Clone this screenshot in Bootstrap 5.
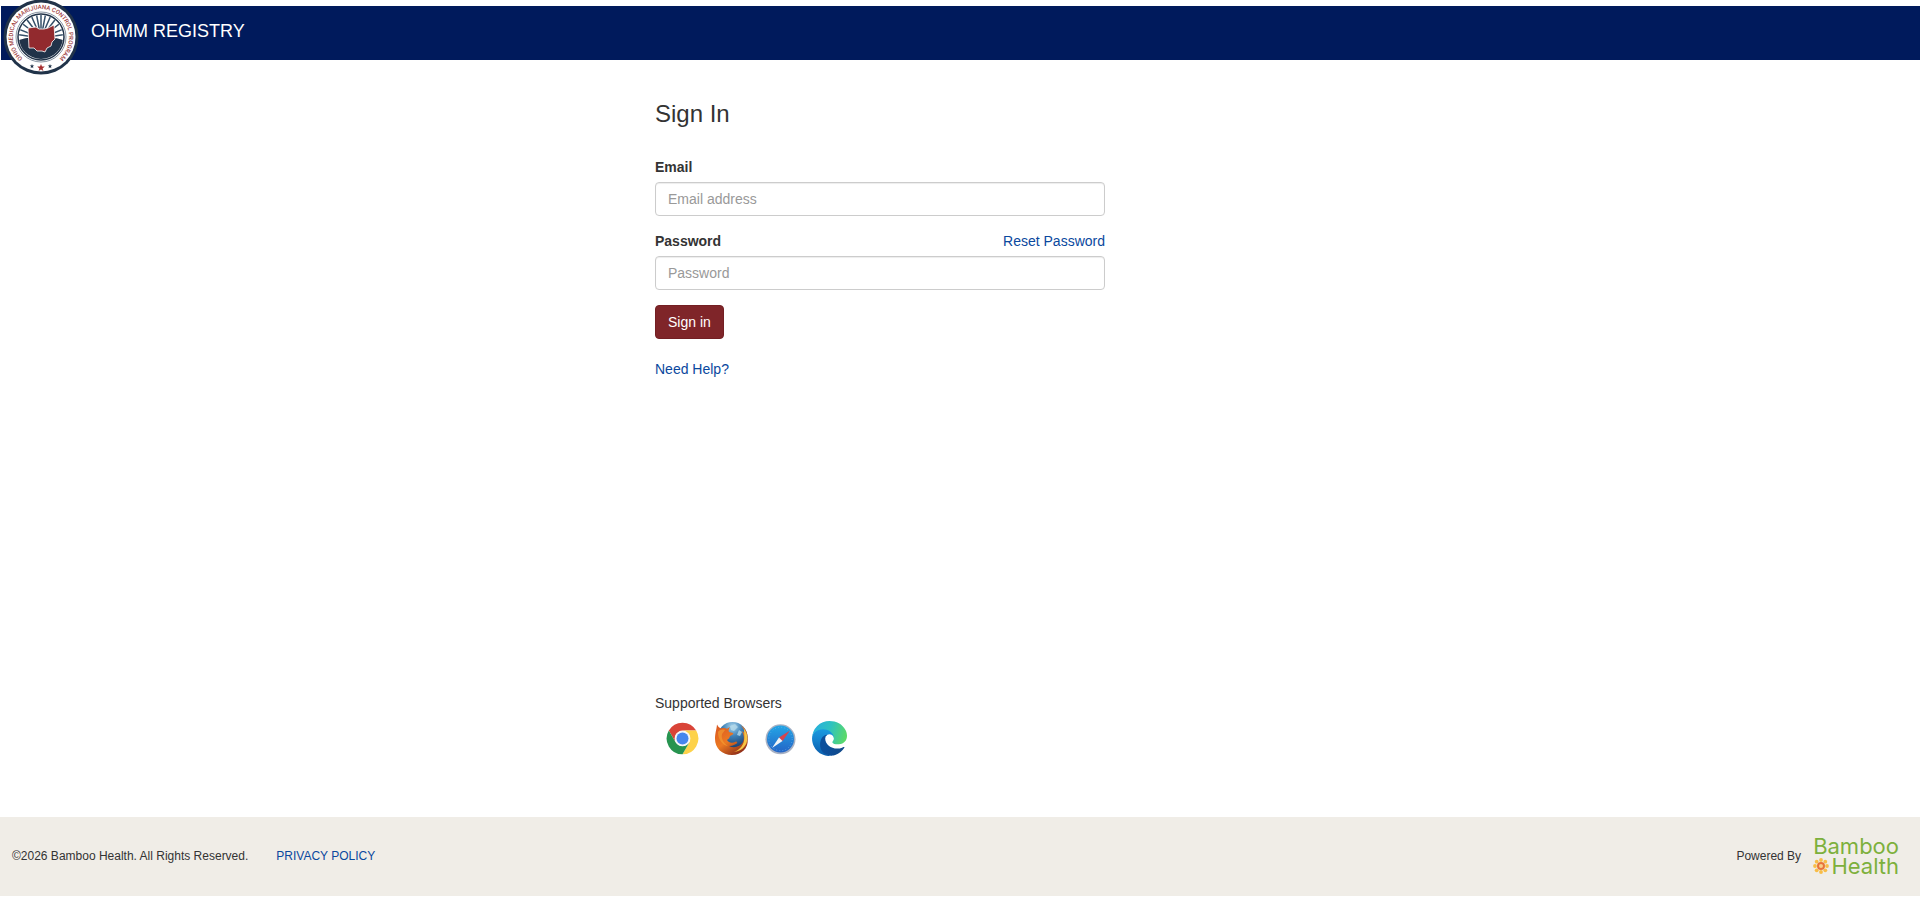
<!DOCTYPE html>
<html lang="en">
<head>
<meta charset="utf-8">
<meta name="viewport" content="width=device-width, initial-scale=1">
<title>OHMM Registry - Sign In</title>
<link href="https://cdn.jsdelivr.net/npm/bootstrap@5.3.0/dist/css/bootstrap.min.css" rel="stylesheet">
<style>
  body { font-family: "Liberation Sans", Arial, sans-serif; font-size: 14px; line-height: 20px; color: #333; padding: 6px 3px 20px 0; }
  a { color: #0a489e; text-decoration: none; }
  a:hover { text-decoration: underline; }
  .site-header { background: #001a5c; height: 54px; margin-left: 1px; padding-left: 90px; }
  .site-title { font-size: 18px; line-height: 20px; padding-top: 15px; color: #fff; }
  .seal { position: absolute; left: 2px; top: -6px; width: 76px; height: 76px; }
  .signin { width: 450px; max-width: 100%; }
  .signin-col { padding: 41px 15px 0; }
  h1 { font-size: 24px; line-height: 26px; margin-bottom: 30px; }
  .form-label { margin-bottom: 5px; }
  .field { margin-bottom: 15px; }
  .form-control { font-size: 14px; line-height: 20px; padding: 6px 12px; border-color: #ccc; border-radius: 4px; color: #555; box-shadow: inset 0 1px 1px rgba(0,0,0,.075); }
  .form-control::placeholder { color: #999; }
  .btn-signin { --bs-btn-color: #fff; --bs-btn-bg: #7f2529; --bs-btn-border-color: #731f23; --bs-btn-hover-color: #fff; --bs-btn-hover-bg: #661b1f; --bs-btn-hover-border-color: #591619; --bs-btn-font-size: 14px; --bs-btn-line-height: 20px; --bs-btn-border-radius: 4px; margin-bottom: 20px; }
  .browsers { padding: 0 15px 61px; }
  .browser-icons { gap: 14px; margin: 8px 0 0 10px; }
  .browser-icons svg { width: 35px; height: 35px; }
  .site-footer { background: #f0ede7; min-height: 79px; font-size: 12px; padding: 0 21px 2px 12px; }
  .footer-links { gap: 28px; }
  .brand-logo { font-family: Inter, sans-serif; font-size: 22px; line-height: 20px; color: #7db03c; }
  .brand-logo svg { width: 16px; height: 16px; }
</style>
</head>
<body class="d-flex flex-column min-vh-100">
<header class="site-header position-relative">
  <svg class="seal" viewBox="0 0 76 76" role="img" aria-label="Ohio Medical Marijuana Control Program">
    <defs><path id="ring" d="M26.200 62.400A28 28 0 1 1 49.800 62.400"/><clipPath id="disc"><circle cx="38" cy="37" r="22"/></clipPath></defs>
    <circle cx="38" cy="37" r="37.5" fill="#213349"/>
    <circle cx="38" cy="37" r="34.5" fill="#fff"/>
    <circle cx="38" cy="37" r="25" fill="#fff" stroke="#8794a2" stroke-width="1"/>
    <circle cx="38" cy="37" r="23" fill="#fff" stroke="#213349" stroke-width="1.5"/>
    <g clip-path="url(#disc)">
      <path stroke="#365069" stroke-width="1.5" d="M38 38V12M38 38 33 12M38 38 43 12M38 38 27 13M38 38 49 13M38 38 21 16M38 38 55 16M38 38 16 21M38 38 60 21M38 38 13 28M38 38 63 28M38 38 11 34M38 38 65 34"/>
      <path fill="#213349" d="M14 41q12-6 24-2 12-4 24 2v22H14z"/>
    </g>
    <path fill="#922a2e" stroke="#fff" stroke-width=".8" d="M25 28l8-1 3 2 5 0 4-1 6-3 1 14-3 3-1 4-4 2-2 4-3-1-5 0-3-3-5 0z"/>
    <text fill="#a04040" font-family="Roboto,'Liberation Sans',sans-serif" font-size="6" font-weight="500"><textPath href="#ring" startOffset="50%" text-anchor="middle">OHIO MEDICAL MARIJUANA CONTROL PROGRAM</textPath></text>
    <path fill="#a52e30" d="M38 64l1 2.600h2.800l-2.200 1.800.8 2.600-2.400-1.600-2.400 1.600.8-2.600-2.200-1.800h2.800z"/>
    <path fill="#213349" d="M29 64l.6 1.600h1.700l-1.400 1 .5 1.700-1.400-1-1.400 1 .5-1.700-1.400-1h1.700zM47 64l.6 1.600h1.700l-1.400 1 .5 1.700-1.400-1-1.400 1 .5-1.700-1.400-1h1.700z"/>
  </svg>
  <div class="site-title">OHMM REGISTRY</div>
</header>

<main class="flex-grow-1 d-flex flex-column">
  <div class="row g-0">
    <div class="col-md-6 offset-md-4 signin-col">
      <form class="signin">
        <h1 class="fw-normal">Sign In</h1>
        <div class="field">
          <label class="form-label fw-bold d-block" for="email">Email</label>
          <input class="form-control" type="email" id="email" placeholder="Email address">
        </div>
        <div class="field">
          <div class="d-flex justify-content-between">
            <label class="form-label fw-bold" for="password">Password</label>
            <a href="#">Reset Password</a>
          </div>
          <input class="form-control" type="password" id="password" placeholder="Password">
        </div>
        <button class="btn btn-signin d-block" type="submit">Sign in</button>
        <a href="#">Need Help?</a>
      </form>
    </div>
  </div>
  <div class="row g-0 mt-auto">
    <div class="col-md-6 offset-md-4 browsers">
      <div>Supported Browsers</div>
      <div class="browser-icons d-flex">
        <svg viewBox="0 0 35 35" role="img" aria-label="Chrome">
          <circle cx="17.5" cy="17.5" r="15.8" fill="#fff"/>
          <path fill="#d94438" d="M3.8 9.6A15.8 15.8 0 0 1 31.2 9.6H17.5a7.9 7.9 0 0 0-6.8 11.8z"/>
          <path fill="#fdd24a" d="M31.2 9.6A15.8 15.8 0 0 1 17.5 33.3L24.3 21.4A7.9 7.9 0 0 0 17.5 9.6z"/>
          <path fill="#279450" d="M3.8 9.6A15.8 15.8 0 0 0 17.5 33.3L24.3 21.4a7.9 7.9 0 0 1-13.6 0z"/>
          <circle cx="17.5" cy="17.5" r="7.6" fill="#f4f6f8"/><circle cx="17.5" cy="17.5" r="6" fill="#4686ee"/>
        </svg>
        <svg viewBox="0 0 35 35" role="img" aria-label="Firefox">
          <defs>
            <radialGradient id="globe" cx=".5" cy=".15" r=".8"><stop stop-color="#a6d3ec"/><stop offset=".4" stop-color="#3f82b8"/><stop offset="1" stop-color="#12305f"/></radialGradient>
            <linearGradient id="fox" x1="0" y1="0" x2=".7" y2="1"><stop stop-color="#d95520"/><stop offset=".55" stop-color="#ec7a22"/><stop offset="1" stop-color="#8d2c18"/></linearGradient>
          </defs>
          <circle cx="18.5" cy="16" r="15" fill="url(#globe)"/>
          <path fill="#b5daea" opacity=".8" d="M16 5l5-2 3 3-4 4-3-1zM25 9l3 2-2 4-3-1z"/>
          <path fill="url(#fox)" d="M3 3.500c1 2 2 3 4 4 2-.6 4-.5 6 .3L16 6c-1.500 2-1.700 3.500-1 5l4 1c1 1-1 2-3 3-.3 2-1.600 3-3 4 2 3 5 3.500 9 1.500 2 .4 1.500 2-1 3-2 1-4 1.500-6 1.500 5 2.500 11 1 14-4 1.500-3 1-7-1-11 2 1 3 3 3.500 5-.2-5-2.500-8.500-5-11 5 3 7.500 8 7.200 14.500C34.500 27 27.500 34 18 34 8 34 1 27 1 18 1 12 2.500 9 3 3.500z"/>
          <path fill="#f6c443" d="M30 8c3 4 4 8 3 12-1 6-6 10-13 11 5-2 9-6 10-11 .8-4 0-8 0-12z"/>
          <path fill="#f29b32" d="M4 11c1-2 4-3 7-2l-3 4c-1 4 1 9 6 12-6-1-10-7-10-14z" opacity=".7"/>
        </svg>
        <svg viewBox="0 0 35 35" role="img" aria-label="Safari">
          <defs><linearGradient id="sky" x1="0" y1="0" x2="0" y2="1"><stop stop-color="#23a6e6"/><stop offset="1" stop-color="#2464c6"/></linearGradient></defs>
          <circle cx="17.500" cy="18.300" r="15" fill="#a8b1c3"/>
          <circle cx="17.500" cy="18" r="13.500" fill="url(#sky)"/>
          <circle cx="17.500" cy="18" r="11.700" fill="none" stroke="#74bdf0" stroke-width="1" stroke-dasharray=".6 2.500"/>
          <path fill="#d8434c" d="M27 9.500l-11 7 3.500 3.500z"/><path fill="#f2f5f7" d="M9 27l7-10.500 3.500 3.500z"/>
        </svg>
        <svg viewBox="0 0 256 256" role="img" aria-label="Edge">
          <defs>
            <linearGradient id="deep" x1=".2" y1=".6" x2=".9" y2=".6"><stop stop-color="#0c4f9c"/><stop offset="1" stop-color="#114a8b"/></linearGradient>
            <linearGradient id="mid" x1=".5" y1="0" x2=".4" y2="1"><stop stop-color="#1b9de2"/><stop offset=".45" stop-color="#1584cf"/><stop offset="1" stop-color="#0a5cab"/></linearGradient>
            <linearGradient id="aqua" x1="0" y1=".3" x2="1" y2=".5"><stop stop-color="#26aee0"/><stop offset=".5" stop-color="#2fc2c0"/><stop offset="1" stop-color="#5bd968"/></linearGradient>
          </defs>
          <path fill="url(#mid)" d="M105.700 241.400A79.200 79.200 0 0 1 83 220.100a80.700 80.700 0 0 1 29.800-120c3.100-1.500 8.500-4.100 15.600-4a32.400 32.400 0 0 1 25.700 13 31.900 31.900 0 0 1 6.300 18.700c0-.2 24.500-79.600-80-79.600C36.500 48.200.4 90 .4 126.500c-.2 19.300 4 38.500 12.100 56a128 128 0 0 0 156.400 67.100 75.500 75.500 0 0 1-63.200-8.200z"/>
          <path fill="url(#deep)" d="M231 190.500c-3.400 1.800-6.900 3.400-10.500 4.700a101.700 101.700 0 0 1-35.800 6.400c-47.200 0-88.300-32.400-88.300-74.100a31.500 31.500 0 0 1 16.400-27.300c-42.700 1.800-53.700 46.300-53.700 72.400 0 73.700 68 81.200 82.600 81.200 7.900 0 19.800-2.300 27-4.500l1.300-.5a128.300 128.300 0 0 0 66.500-52.700 4 4 0 0 0-5.500-5.600z"/>
          <path fill="url(#aqua)" d="M152.300 149c-.8 1-3.300 2.500-3.300 5.700 0 2.600 1.700 5.100 4.700 7.200 14.400 10 41.500 8.700 41.600 8.700 10.700 0 21.100-2.900 30.300-8.300a61.400 61.400 0 0 0 30.400-52.900c.3-22.400-8-37.300-11.300-43.900C223.500 23.900 177.700 0 128 0A128 128 0 0 0 0 126.200c.5-36.500 36.800-66 80-66 3.500 0 23.500.3 42 10 16.300 8.600 24.900 19 30.800 29.200 6.200 10.700 7.300 24.100 7.300 29.500 0 5.300-2.700 13.300-7.800 20.100z"/>
        </svg>
      </div>
    </div>
  </div>
</main>

<footer class="site-footer d-flex align-items-center justify-content-between">
  <div class="footer-links d-flex">
    <span>©2026 Bamboo Health. All Rights Reserved.</span>
    <a href="#">PRIVACY POLICY</a>
  </div>
  <div class="d-flex align-items-center gap-2">
    <span>Powered By</span>
    <div class="brand-logo text-end ms-1">
      <div>Bamboo</div>
      <div class="d-flex align-items-center justify-content-between">
        <svg viewBox="0 0 16 16" aria-hidden="true">
          <g fill="#f8bd48"><circle cx="8" cy="2" r="1.900"/><circle cx="8" cy="14" r="1.900"/><circle cx="2" cy="8" r="1.900"/><circle cx="14" cy="8" r="1.900"/><circle cx="3.700" cy="3.700" r="1.900"/><circle cx="12.300" cy="3.700" r="1.900"/><circle cx="3.700" cy="12.300" r="1.900"/><circle cx="12.300" cy="12.300" r="1.900"/></g>
          <circle cx="8" cy="8" r="3" fill="#f9d08a" stroke="#e8743a" stroke-width="2"/>
        </svg>
        <span>Health</span>
      </div>
    </div>
  </div>
</footer>
<script src="https://cdn.jsdelivr.net/npm/bootstrap@5.3.0/dist/js/bootstrap.bundle.min.js"></script>
</body>
</html>
